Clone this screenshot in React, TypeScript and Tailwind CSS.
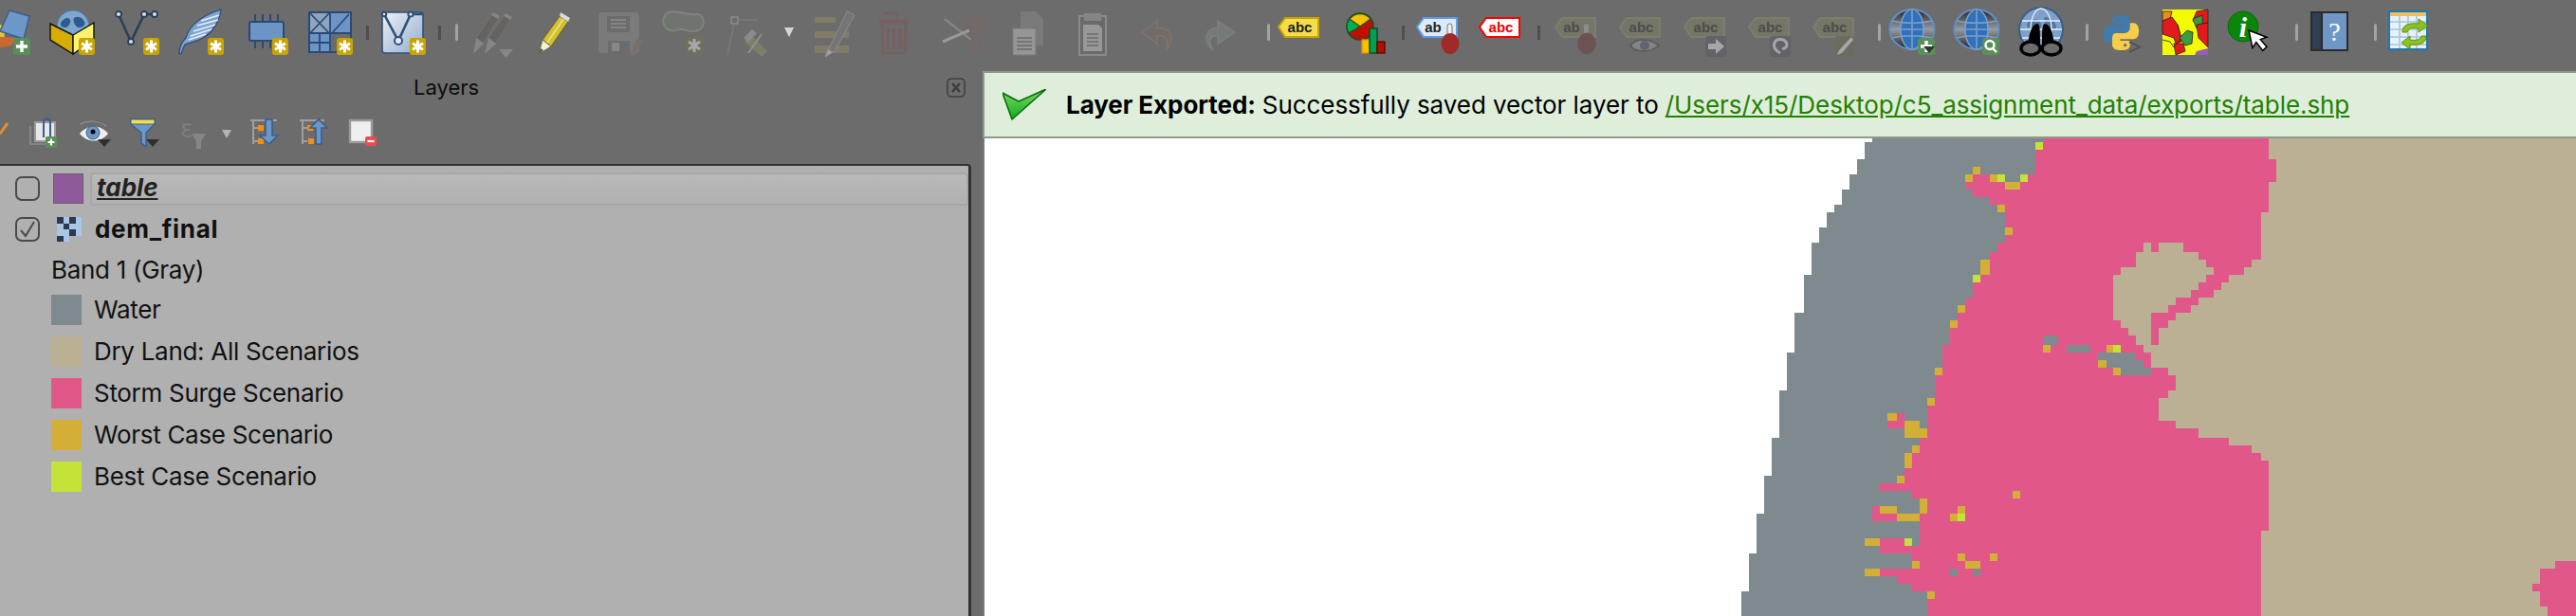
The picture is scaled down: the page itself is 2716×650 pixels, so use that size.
import React from 'react';

// step lists: [row top, x where the colour ends]
const MAP_BOTTOM = 1530;
const whiteEdge: number[][] = [[18, 298], [30, 284], [84, 270], [132, 257], [180, 243], [228, 229], [252, 216], [300, 202], [348, 188], [450, 175], [570, 157], [696, 144], [816, 130], [966, 116], [1086, 103], [1206, 89], [1332, 75], [1452, 62]];
const grayEdge: number[][] = [[18, 606], [54, 592], [132, 466], [180, 480], [204, 510], [228, 538], [348, 524], [378, 510], [402, 493], [450, 493], [474, 480], [522, 466], [546, 466], [570, 452], [618, 438], [672, 425], [744, 425], [768, 411], [864, 397], [936, 397], [966, 383], [990, 383], [1014, 370], [1062, 356], [1110, 312], [1134, 370], [1158, 383], [1308, 312], [1332, 370], [1380, 284], [1404, 342], [1428, 370], [1452, 411], [1476, 397]];
const pinkEdge: number[][] = [[18, 1013], [84, 1027], [156, 1013], [252, 1000], [402, 983], [426, 969], [450, 941], [474, 928], [498, 914], [522, 887], [546, 873], [570, 846], [594, 832], [618, 815], [672, 787], [696, 801], [744, 832], [768, 846], [816, 832], [840, 815], [912, 846], [936, 887], [966, 941], [990, 983], [1014, 1000], [1038, 1013], [1260, 1000]];

const GRAY = '#7e8a8e';
const TAN = '#bcb094';
const PINK = '#e1578a';
const GOLD = '#d3af38';
const LIME = '#c4e338';

// x0, x1, y0, y1, colour
const cells: [number, number, number, number, string][] = [
  [592, 606, 30, 54, LIME], [480, 493, 108, 132, GOLD], [466, 480, 132, 156, GOLD], [480, 510, 132, 156, PINK], [510, 524, 132, 156, GOLD], [524, 538, 132, 156, LIME], [538, 565, 132, 156, GRAY], [565, 578, 132, 156, LIME], [578, 592, 132, 156, PINK], [493, 592, 108, 132, GRAY],
  [466, 592, 156, 180, PINK], [538, 565, 156, 180, GOLD], [524, 538, 228, 252, GOLD], [538, 551, 300, 324, GOLD], [493, 510, 402, 450, GOLD], [480, 493, 450, 474, LIME], [452, 466, 546, 570, GOLD], [438, 452, 594, 618, GOLD],
  [606, 634, 642, 672, GRAY], [606, 620, 672, 696, GOLD], [648, 692, 672, 696, GRAY], [720, 733, 672, 696, GOLD], [733, 746, 672, 696, LIME], [706, 774, 696, 720, GRAY], [706, 720, 720, 744, GOLD], [720, 788, 720, 744, GRAY], [733, 747, 744, 768, GOLD], [747, 802, 744, 768, GRAY],
  [411, 425, 744, 768, GOLD], [397, 411, 840, 864, GOLD], [325, 342, 888, 912, GOLD], [342, 356, 888, 912, PINK], [325, 356, 912, 936, PINK], [356, 383, 912, 936, GOLD], [356, 397, 936, 966, GOLD], [370, 383, 990, 1014, GOLD], [356, 370, 1014, 1062, GOLD], [342, 356, 1086, 1110, GOLD],
  [551, 565, 1134, 1158, GOLD], [383, 397, 1158, 1206, GOLD], [298, 312, 1182, 1206, PINK], [312, 342, 1182, 1206, GOLD], [452, 466, 1182, 1206, GOLD], [298, 342, 1206, 1230, PINK], [342, 383, 1206, 1230, GOLD], [438, 452, 1206, 1230, GOLD], [452, 466, 1206, 1230, LIME],
  [284, 312, 1284, 1308, GOLD], [312, 356, 1284, 1308, PINK], [356, 370, 1284, 1308, LIME], [370, 383, 1284, 1308, GRAY], [452, 466, 1332, 1356, GOLD], [510, 524, 1332, 1356, GOLD], [370, 383, 1356, 1380, GOLD], [466, 493, 1356, 1380, GOLD], [284, 312, 1380, 1404, GOLD], [438, 452, 1380, 1404, GRAY], [480, 493, 1380, 1404, GRAY], [397, 411, 1452, 1476, GOLD],
  [787, 801, 348, 378, TAN], [815, 859, 348, 378, TAN], [774, 887, 378, 402, TAN], [774, 900, 402, 426, TAN], [746, 914, 426, 450, TAN], [733, 900, 450, 474, TAN], [733, 887, 474, 498, TAN], [733, 873, 498, 522, TAN], [733, 846, 522, 546, TAN], [733, 832, 546, 570, TAN], [733, 801, 570, 594, TAN], [746, 801, 594, 618, TAN], [760, 801, 618, 642, TAN], [774, 801, 642, 672, TAN],
  [1530, 1568, 1356, 1380, PINK], [1503, 1568, 1380, 1428, PINK], [1489, 1568, 1428, 1452, PINK], [1503, 1568, 1452, 1500, PINK], [1517, 1568, 1500, 1530, PINK],
];

const stepPath = (steps: number[][]) => {
  let d = `M0 ${steps[0][0]}`;
  steps.forEach((s, i) => {
    const next = i + 1 < steps.length ? steps[i + 1][0] : MAP_BOTTOM;
    d += `H${s[1]}V${next}`;
  });
  return d + 'H0Z';
};

const Ico: React.FC<{ className?: string; size?: number; children: React.ReactNode }> = ({ className = '', size = 48, children }) => (
  <svg viewBox={`0 0 ${size} ${size}`} width={size} height={size} className={`shrink-0 overflow-visible ${className}`}>
    {children}
  </svg>
);

const Sep: React.FC<{ light?: boolean; className?: string }> = ({ light, className = '' }) => (
  <div className={`shrink-0 ${light ? 'w-[3px] h-[18px] rounded-sm bg-[#a3a3a3]' : 'w-[3px] h-[15px] bg-[#4e4e4e]'} ${className}`} />
);

const Star = () => (
  <g>
    <rect x="31" y="30" width="17" height="18" rx="3" fill="#c9a400" />
    <path d="M39.5 32.5v13M34 35.8l11 6.4M34 42.2l11-6.4" stroke="#fff" strokeWidth="3" />
  </g>
);

const GreenBadge: React.FC<{ kind?: 'plus' | 'search' }> = ({ kind = 'plus' }) => (
  <g>
    <rect x="30" y="30" width="18" height="18" rx="3" fill="#5a8f5a" />
    {kind === 'plus' ? (
      <path d="M39 33v12M33 39h12" stroke="#fff" strokeWidth="3.4" />
    ) : (
      <g fill="none" stroke="#fff" strokeWidth="2.4">
        <circle cx="38" cy="37.5" r="4.5" />
        <path d="M41 41l4 4" />
      </g>
    )}
  </g>
);

const Tag: React.FC<{ fill: string; stroke: string; text: string; color: string; size?: number }> = ({ fill, stroke, text, color, size = 15 }) => (
  <g>
    <path d="M3 18.5L10 9H45V29H10Z" fill={fill} stroke={stroke} strokeWidth="2" />
    <text x="25.5" y="24" textAnchor="middle" fontFamily="Liberation Sans, sans-serif" fontWeight="700" fontSize={size} fill={color}>{text}</text>
  </g>
);

const PencilShape: React.FC<{ body: string; dark: string; eraser: string; tip: string }> = ({ body, dark, eraser, tip }) => (
  <g>
    <path d="M30 7L39 13L21 39L12 32Z" fill={body} stroke={dark} strokeWidth="1" />
    <path d="M34 10L17 35" stroke={tip} strokeWidth="2" opacity="0.6" />
    <path d="M31 3L41 9L39 13L30 7Z" fill={eraser} />
    <path d="M12 32L21 39L8 47Z" fill={tip} stroke={dark} strokeWidth="0.8" />
    <path d="M10 41L13 43L8 47Z" fill={dark} />
  </g>
);

const Globe: React.FC = () => (
  <g>
    <defs>
      <linearGradient id="globeBand" x1="0" y1="0" x2="0" y2="1">
        <stop offset="0" stopColor="#222" /><stop offset="0.5" stopColor="#9a9a9a" /><stop offset="1" stopColor="#222" />
      </linearGradient>
    </defs>
    <ellipse cx="24" cy="21" rx="23.5" ry="21" fill="url(#globeBand)" stroke="#5f8fc7" strokeWidth="2" />
    <ellipse cx="24" cy="21" rx="12" ry="20" fill="#2f72bb" />
    <g fill="none" stroke="#7d9fc8" strokeWidth="1.6">
      <ellipse cx="24" cy="21" rx="12" ry="21" />
      <path d="M3 12c12 3 30 3 42 0M1 21H47M3 30c12-3 30-3 42 0M24 0v42" />
    </g>
  </g>
);

const Toolbar = () => (
  <div className="flex items-center h-12 mt-[10px] mb-[16px] shrink-0">
    <Ico className="ml-[-16px]">
      <path d="M10 14L22 18L20 32L0 30Z" fill="#e6c532" />
      <path d="M6 28L32 30L28 38L6 42Z" fill="#c9692f" />
      <path d="M26 1L47 7L41 31L16 23Z" fill="#6d97c9" stroke="#3a5f8c" strokeWidth="1.4" />
      <GreenBadge />
    </Ico>
    <Ico className="ml-5">
      <circle cx="25" cy="18" r="17" fill="#7ea6cf" stroke="#4c76a6" />
      <path d="M12 14c4-6 9-6 10-3s-2 8-5 8-6-2-5-5zM26 9c5-3 9 0 11 4s-3 6-6 6-7-7-5-10zM20 24c3 0 4 3 3 6h-3z" fill="#2f5a8e" />
      <path d="M1 15L25 27V47L1 32Z" fill="#d7ad00" stroke="#111" strokeWidth="1.4" />
      <path d="M25 27L47 14V32L25 47Z" fill="#fdf36c" stroke="#111" strokeWidth="1.4" />
      <Star />
    </Ico>
    <Ico className="ml-5">
      <path d="M5 5L18 34L32 5H43" fill="none" stroke="#2a3f58" strokeWidth="2.6" />
      <g fill="#d8dde4" stroke="#2a3f58" strokeWidth="1.8">
        <circle cx="5" cy="5" r="3" /><circle cx="18" cy="34" r="3" /><circle cx="32" cy="5" r="3" /><circle cx="43" cy="5" r="3" />
      </g>
      <Star />
    </Ico>
    <Ico className="ml-5">
      <path d="M1 47C1 40 4 34 8 30C12 16 26 6 45 0C44 10 38 24 24 31C18 34 12 35 7 37C5 40 4 44 3 47Z" fill="#7fa4d2" stroke="#2a4a75" strokeWidth="1.2" />
      <path d="M43 6L24 12M42 11L20 17M39 16L16 23M35 21L13 28M29 26L11 32" stroke="#e6eef8" strokeWidth="1.7" />
      <Star />
    </Ico>
    <Ico className="ml-5">
      <path d="M13 5v8M21 5v8M29 5v8M37 5v8M13 33v8M21 33v8M29 33v8" stroke="#2a4a75" strokeWidth="2" />
      <rect x="7" y="13" width="36" height="20" rx="2" fill="#6c95c5" stroke="#2a4a75" strokeWidth="2" />
      <Star />
    </Ico>
    <Ico className="ml-5">
      <rect x="2" y="3" width="44" height="42" fill="#6c95c5" stroke="#2a4a75" strokeWidth="2" />
      <rect x="3" y="4" width="20" height="21" fill="#8fa4bd" />
      <path d="M3 4L23 25M23 4L3 25M24 3V45M2 25H46M13 25V45M2 35H24M26 25L44 5" stroke="#2a4a75" strokeWidth="1.8" fill="none" />
      <path d="M25 26H45V44H25Z" fill="#6c6c6c" />
      <Star />
    </Ico>
    <Sep className="ml-[14px]" />
    <Ico className="ml-3">
      <defs>
        <linearGradient id="vbg" x1="0" y1="0" x2="1" y2="1">
          <stop offset="0" stopColor="#eef1f5" /><stop offset="1" stopColor="#8facd0" />
        </linearGradient>
      </defs>
      <rect x="2" y="3" width="43" height="43" rx="3" fill="url(#vbg)" stroke="#2f5079" strokeWidth="1.6" />
      <path d="M4 5L19 33L32 5L44 5" fill="none" stroke="#2f5079" strokeWidth="2.6" />
      <g fill="#e6ebf2" stroke="#2f5079" strokeWidth="2">
        <circle cx="19" cy="33" r="4" /><circle cx="32" cy="5" r="2.6" /><circle cx="4" cy="5" r="2.2" />
      </g>
      <Star />
    </Ico>
    <Sep className="ml-[13px]" />
    <Sep light className="ml-[15px]" />
    <Ico className="ml-[13px]">
      <g opacity="0.85">
        <path d="M24 3L31 7L14 36L6 30Z" fill="#66615f" stroke="#777" />
        <path d="M24 3L31 7L29 10L22 6Z" fill="#8a8a8a" />
        <path d="M6 30L14 36L3 47Z" fill="#8a8a8a" />
        <path d="M37 4L44 8L27 36L19 30Z" fill="#66615f" stroke="#777" />
        <path d="M37 4L44 8L42 11L35 7Z" fill="#8a8a8a" />
        <path d="M19 30L27 36L15 47Z" fill="#8a8a8a" />
      </g>
      <path d="M30 42H45L37.5 51Z" fill="#868686" />
    </Ico>
    <Ico className="ml-4">
      <PencilShape body="#d6bf28" dark="#5a5a45" eraser="#d9d9d9" tip="#f2f2d0" />
    </Ico>
    <Ico className="ml-5">
      <rect x="3" y="3" width="43" height="43" rx="4" fill="#7a7a7a" />
      <path d="M12 7H36V24H12ZM13 33H36V46H13Z" fill="#6c6c6c" />
      <path d="M16 11H32M16 15H32M16 19H32" stroke="#858585" strokeWidth="2" />
      <rect x="17" y="35" width="8" height="9" fill="#868686" />
      <path d="M44 30L50 34L40 50L36 48Z" fill="#7a706a" />
    </Ico>
    <Ico className="ml-[22px]">
      <path d="M4 5C12 -2 26 7 36 5C46 4 46 20 38 22C28 26 24 18 14 22C2 24-2 11 4 5Z" fill="#6f746f" stroke="#7f837e" strokeWidth="2" />
      <rect x="24" y="27" width="20" height="22" rx="2" fill="#6f6e5f" />
      <path d="M34 31v14M28 34l12 8M28 42l12-8" stroke="#a8a8a8" strokeWidth="3" />
      <circle cx="34" cy="38" r="3" fill="#a8a8a8" />
    </Ico>
    <Ico className="ml-[19px]">
      <rect x="6" y="8" width="7" height="7" fill="#6c6c6c" stroke="#9a9a9a" />
      <path d="M13 11H34M9 15L2 48" stroke="#7a7a7a" strokeWidth="1.4" fill="none" />
      <path d="M20 34L27 27L44 44L38 50Z" fill="#7e7e68" />
      <path d="M38 26L24 46" stroke="#8f8f8f" strokeWidth="2" />
      <path d="M19 30L28 21L33 25L24 35Z" fill="#8a8a8a" />
    </Ico>
    <div className="shrink-0 ml-[14px] w-[10px] h-[10px] [clip-path:polygon(0_0,100%_0,50%_100%)] bg-[#d6d6d6]" />
    <Ico className="ml-5">
      <path d="M2 8H24V14H2ZM2 23H24V30H2ZM2 38H38V46H2ZM28 23H38V30H28Z" fill="#807c66" />
      <path d="M36 2L44 6L23 44L13 50Z" fill="#757575" stroke="#8c8c8c" />
      <path d="M16 42L21 45L13 50Z" fill="#a0a0a0" />
    </Ico>
    <Ico className="ml-[17px]">
      <g fill="none" stroke="#766060" strokeWidth="3">
        <path d="M4 12H36M10 4H24V12" />
        <path d="M8 14L9 46H32L33 14Z" />
        <path d="M14 20V42M20.5 20V42M27 20V42" strokeWidth="3.6" />
      </g>
    </Ico>
    <Ico className="ml-[22px]">
      <g fill="none">
        <path d="M4 10L32 32" stroke="#858585" strokeWidth="2.4" />
        <path d="M2 34L30 22" stroke="#999" strokeWidth="3" />
        <ellipse cx="36" cy="17" rx="5" ry="8" stroke="#7d6464" strokeWidth="2.4" />
        <ellipse cx="36" cy="38" rx="5" ry="8" stroke="#7d6464" strokeWidth="2.4" />
      </g>
    </Ico>
    <Ico className="ml-5">
      <path d="M16 2H32L40 10V38H16Z" fill="#7a7a7a" />
      <path d="M8 20H32V48H8Z" fill="#969696" stroke="#7a7a7a" />
      <path d="M12 30H28M12 34H28M12 38H28M12 42H28" stroke="#6a6a6a" strokeWidth="1.4" />
    </Ico>
    <Ico className="ml-5">
      <rect x="10" y="7" width="28" height="41" fill="#6a6a6a" stroke="#8a8a8a" strokeWidth="2" />
      <rect x="15" y="4" width="18" height="8" fill="#858585" />
      <path d="M14 16H30L34 20V44H14Z" fill="#989898" />
      <path d="M18 26H30M18 30H30M18 34H30M18 38H30" stroke="#6a6a6a" strokeWidth="1.4" />
    </Ico>
    <Ico className="ml-5">
      <path d="M24 12L8 24L24 36V28C32 26 36 30 34 42C42 32 40 18 24 20Z" fill="#746a64" stroke="#7c7470" strokeWidth="1.5" />
    </Ico>
    <Ico className="ml-5">
      <path d="M20 12L38 24L20 36V28C12 27 10 32 14 42C4 34 6 18 20 20Z" fill="#75797a" stroke="#7b7f80" strokeWidth="1.5" />
    </Ico>
    <Sep light className="ml-6" />
    <Ico className="ml-[6px]">
      <Tag fill="#f3dd4a" stroke="#c9a400" text="abc" color="#1d1d1d" />
    </Ico>
    <Ico className="ml-[23px]">
      <circle cx="18" cy="18" r="14" fill="#c20e00" stroke="#234a24" strokeWidth="1.6" />
      <path d="M18 18L6 25A14 14 0 0 1 18 4Z" fill="#00b050" stroke="#234a24" strokeWidth="1.2" />
      <path d="M18 18L7 10A14 14 0 0 1 29 10Z" fill="#f5c400" stroke="#234a24" strokeWidth="1.2" />
      <rect x="20" y="32" width="8" height="14" fill="#f5c400" stroke="#e88a00" strokeWidth="1.4" />
      <rect x="28" y="20" width="8" height="26" fill="#00a050" stroke="#0c4a20" strokeWidth="1.4" />
      <rect x="36" y="34" width="8" height="12" fill="#b01000" stroke="#5a0a00" strokeWidth="1.4" />
    </Ico>
    <Sep className="ml-[14px]" />
    <Ico className="ml-[10px]">
      <path d="M3 18.5L10 9H45V29H10Z" fill="#dfeaf7" stroke="#5d9ce8" strokeWidth="2" />
      <text x="20" y="24" textAnchor="middle" fontFamily="Liberation Sans, sans-serif" fontWeight="700" fontSize="15" fill="#222">ab</text>
      <rect x="35" y="15" width="5" height="16" rx="2.5" fill="#eee" stroke="#555" strokeWidth="0.8" />
      <ellipse cx="38" cy="36" rx="9.5" ry="11" fill="#a02a2a" />
    </Ico>
    <Ico className="ml-[18px]">
      <Tag fill="#fff" stroke="#ff0000" text="abc" color="#ee0000" />
    </Ico>
    <Sep className="ml-4" />
    <Ico className="ml-[13px]">
      <path d="M3 18.5L10 9H45V29H10Z" fill="#767666" stroke="#7c7c70" strokeWidth="2" />
      <text x="20" y="24" textAnchor="middle" fontFamily="Liberation Sans, sans-serif" fontWeight="700" fontSize="15" fill="#4c4c4c">ab</text>
      <rect x="33" y="15" width="5" height="16" rx="2.5" fill="#8c8c8c" />
      <ellipse cx="36" cy="36" rx="9.5" ry="11" fill="#6e5252" stroke="#5f5f5f" />
    </Ico>
    <Ico className="ml-5">
      <Tag fill="#767666" stroke="#7c7c70" text="abc" color="#4c4c4c" />
      <path d="M14 38C20 30 34 30 44 38C34 46 20 46 14 38Z" fill="#848484" stroke="#595959" strokeWidth="1.4" />
      <circle cx="29" cy="38" r="5" fill="#5f6670" />
    </Ico>
    <Ico className="ml-5">
      <Tag fill="#767666" stroke="#7c7c70" text="abc" color="#4c4c4c" />
      <rect x="25" y="28" width="22" height="22" rx="3" fill="#606368" />
      <path d="M28 36H36V31L45 39L36 47V42H28Z" fill="#a6a6a6" />
    </Ico>
    <Ico className="ml-5">
      <Tag fill="#767666" stroke="#7c7c70" text="abc" color="#4c4c4c" />
      <rect x="25" y="28" width="22" height="22" rx="3" fill="#606368" />
      <path d="M36 46C32 44 28 40 30 35C32 30 42 30 43 37C43 40 40 42 38 41" fill="none" stroke="#a6a6a6" strokeWidth="3" />
    </Ico>
    <Ico className="ml-5">
      <Tag fill="#767666" stroke="#7c7c70" text="abc" color="#4c4c4c" />
      <rect x="26" y="28" width="20" height="22" rx="2" fill="#6c6c5e" />
      <path d="M43 29L45 32L33 46L28 48L30 43Z" fill="#a6a6a6" />
    </Ico>
    <Sep light className="ml-[23px]" />
    <Ico className="ml-[9px]">
      <Globe />
      <GreenBadge />
      <path d="M36 39L48 39L42 46Z" fill="#333" />
    </Ico>
    <Ico className="ml-5">
      <Globe />
      <GreenBadge kind="search" />
    </Ico>
    <Ico className="ml-5">
      <circle cx="24" cy="21" r="23" fill="#7da1c9" stroke="#385f8c" strokeWidth="2" />
      <path d="M10 14c6-6 14-4 14 2s-6 8-10 6-6-6-4-8zM28 8c6 0 12 6 12 10s-8 4-10 0-4-10-2-10z" fill="#4f76a3" />
      <g fill="none" stroke="#e8eef5" strokeWidth="1.3">
        <ellipse cx="24" cy="21" rx="11" ry="22" />
        <path d="M2 21H46M4 12H44M4 30H44" />
      </g>
      <g fill="#000">
        <path d="M10 36C12 24 14 16 20 15C23 15 23 24 23 36ZM38 36C36 24 34 16 28 15C25 15 25 24 25 36Z" />
      </g>
      <g fill="#6c6c6c" stroke="#000" strokeWidth="3.4">
        <ellipse cx="13" cy="41" rx="10" ry="7" />
        <ellipse cx="35" cy="41" rx="10" ry="7" />
      </g>
    </Ico>
    <Sep light className="ml-[23px]" />
    <Ico className="ml-[11px]">
      <g transform="translate(3 4) scale(1.7)">
        <path d="M12 1C8 1 6.5 2.3 6.5 4.5V7H12.5V8H4.5C2.3 8 1 10 1 13C1 16 2.3 18 4.5 18H6.5V15C6.5 13 8 11.7 10 11.7H15C16.5 11.7 17.5 10.7 17.5 9V4.5C17.5 2.3 15.5 1 12 1Z" fill="#3f7cad" />
        <circle cx="9.5" cy="4.2" r="1" fill="#6c6c6c" />
        <g transform="rotate(180 12 12)">
          <path d="M12 1C8 1 6.5 2.3 6.5 4.5V7H12.5V8H4.5C2.3 8 1 10 1 13C1 16 2.3 18 4.5 18H6.5V15C6.5 13 8 11.7 10 11.7H15C16.5 11.7 17.5 10.7 17.5 9V4.5C17.5 2.3 15.5 1 12 1Z" fill="#f7ce4b" />
          <circle cx="9.5" cy="4.2" r="1" fill="#6c6c6c" />
        </g>
      </g>
      <path d="M32 34L43 39.5L32 45" fill="none" stroke="#555" strokeWidth="2" />
    </Ico>
    <Ico className="ml-[19px]">
      <rect x="0" y="0" width="48" height="48" fill="#f3fb00" />
      <g stroke="#222" strokeWidth="0.8">
        <path d="M0 2H10L8 10L0 12Z" fill="#f08a20" />
        <path d="M0 12L10 8L16 16L20 34L14 36L12 30L0 26Z" fill="#e41a1a" />
        <path d="M16 16L20 30L12 40L8 34L0 32" fill="none" />
        <path d="M36 2L48 0V14L42 16L32 12Z" fill="#e41a1a" />
        <path d="M32 10L42 6L43 24L36 20Z" fill="#3f9a40" />
        <path d="M18 30L26 22L32 24L31 36L24 38Z" fill="#3f9a40" />
        <path d="M36 16L48 14V40L38 30Z" fill="#e41a1a" />
        <path d="M12 36L22 36L24 44L14 48Z" fill="#e41a1a" />
      </g>
      <path d="M34 48L36 44L48 41V48Z" fill="#9b59c0" />
    </Ico>
    <Ico className="ml-5">
      <circle cx="17" cy="18" r="16" fill="#0b860b" stroke="#0a6a0a" />
      <text x="17" y="29" textAnchor="middle" fontFamily="Liberation Serif, serif" fontStyle="italic" fontWeight="700" fontSize="30" fill="#fff">i</text>
      <path d="M23 22L23 41L28 36L33 46L38 43L33 34L40 33Z" transform="rotate(-12 23 22)" fill="#fff" stroke="#000" strokeWidth="1.5" />
    </Ico>
    <Sep light className="ml-6" />
    <Ico className="ml-[9px]">
      <rect x="4" y="2" width="40" height="42" fill="#2b2b2b" />
      <rect x="6" y="4" width="9" height="38" fill="#2e4054" />
      <rect x="17" y="4" width="25" height="38" fill="#6e97c6" />
      <text x="29.5" y="33" textAnchor="middle" fontFamily="Liberation Serif, serif" fontSize="28" fill="#fff">?</text>
    </Ico>
    <Sep light className="ml-[23px]" />
    <Ico className="ml-3">
      <rect x="1" y="2" width="40" height="40" fill="#e6f2fb" stroke="#1a78b0" strokeWidth="2" />
      <rect x="2" y="3" width="38" height="4" fill="#f2bd63" />
      <path d="M2 13H40M2 21H40M2 29H40M2 37H40M12 7V41M21 7V41M30 7V41" stroke="#a9c3d9" strokeWidth="1.6" />
      <path d="M15 24C15 16 22 14 32 15V10L42 17L32 24V20C25 19 21 20 20 24Z" fill="#8cc21d" stroke="#5f8f10" />
      <path d="M40 28C40 36 33 38 23 37V42L14 35L23 28V32C30 33 34 32 35 28Z" fill="#8cc21d" stroke="#5f8f10" />
    </Ico>
  </div>
);

const LayersToolbar = () => (
  <div className="flex items-start h-[63px] pt-[15px] border-b-0">
    <Ico size={32} className="ml-[-24px]">
      <path d="M32 5L24 16" stroke="#d6952a" strokeWidth="3" />
    </Ico>
    <Ico size={32} className="ml-[22px]">
      <path d="M2 8V27H22" fill="none" stroke="#8c8c8c" strokeWidth="1.6" />
      <rect x="7" y="4" width="21" height="20" fill="#e8e8e8" stroke="#9a9a9a" strokeWidth="2" />
      <path d="M16 20V4C16-1 23-1 23 4V20" fill="none" stroke="#3b5f8c" strokeWidth="2" />
      <rect x="18" y="19" width="12" height="12" rx="2" fill="#5a8f5a" />
      <path d="M24 21.5v7M20.5 25h7" stroke="#fff" strokeWidth="2" />
    </Ico>
    <Ico size={32} className="ml-[22px]">
      <path d="M0 6C8 2 20 2 28 8" fill="none" stroke="#8e8e8e" strokeWidth="1.2" />
      <path d="M0 16C8 6 22 6 30 16C22 26 8 26 0 16Z" fill="#f0f0f0" />
      <circle cx="14" cy="15" r="7" fill="#6d97c9" stroke="#3a5f8c" />
      <circle cx="14" cy="14" r="2.5" fill="#000" />
      <path d="M19 22H33L26 30Z" fill="#2f2f2f" />
    </Ico>
    <Ico size={32} className="ml-[21px]">
      <path d="M1 1H26V6L17 15V30L12 26V15L1 6Z" fill="#6d97c9" stroke="#3a5f8c" strokeWidth="1.4" />
      <rect x="1" y="1" width="25" height="5" fill="#f4e04d" stroke="#3a5f8c" strokeWidth="1" />
      <path d="M17 22H31L24 30Z" fill="#2f2f2f" />
    </Ico>
    <Ico size={32} className="ml-5">
      <text x="1" y="20" fontFamily="DejaVu Sans, sans-serif" fontSize="26" fill="#7d7d7d">ε</text>
      <path d="M13 16H28L23 24V32H18V24Z" fill="#858585" />
    </Ico>
    <div className="shrink-0 ml-[13px] mt-[12px] w-[10px] h-[9px] [clip-path:polygon(0_0,100%_0,50%_100%)] bg-[#b5b5b5]" />
    <Ico size={32} className="ml-5">
      <path d="M0 2H28M3 2V27M3 10H8M3 24H8" stroke="#9f9f9f" strokeWidth="2" fill="none" />
      <rect x="8" y="7" width="6" height="6" fill="#f08f1d" />
      <rect x="8" y="21" width="6" height="6" fill="#f08f1d" />
      <path d="M16 1H23V18H29L19.5 27L10 18H16Z" fill="#6d97c9" stroke="#3a5f8c" strokeWidth="1.6" />
    </Ico>
    <Ico size={32} className="ml-5">
      <path d="M0 2H26M3 2V27M3 10H8M3 24H8" stroke="#9f9f9f" strokeWidth="2" fill="none" />
      <rect x="8" y="7" width="6" height="6" fill="#f08f1d" />
      <rect x="9" y="21" width="6" height="6" fill="#f08f1d" />
      <path d="M17 27V10H11L20 1L29 10H23V27Z" fill="#6d97c9" stroke="#3a5f8c" strokeWidth="1.6" />
    </Ico>
    <Ico size={32} className="ml-[19px]">
      <rect x="2" y="2" width="23" height="23" fill="#efefef" stroke="#9a9a9a" strokeWidth="2.4" />
      <rect x="18" y="19" width="12" height="10" rx="2" fill="#ee4a52" />
      <path d="M20.5 24h7" stroke="#fff" strokeWidth="2.2" />
    </Ico>
  </div>
);

const Swatch: React.FC<{ color: string }> = ({ color }) => <div className="w-8 h-8 shrink-0" style={{ backgroundColor: color }} />;

const legend = [
  { label: 'Water', color: GRAY },
  { label: 'Dry Land: All Scenarios', color: TAN },
  { label: 'Storm Surge Scenario', color: PINK },
  { label: 'Worst Case Scenario', color: GOLD },
  { label: 'Best Case Scenario', color: LIME },
];

const Checkbox: React.FC<{ checked?: boolean }> = ({ checked }) => (
  <div className="w-[26px] h-[26px] shrink-0 rounded-[7px] border-2 border-[#4a4a4a] flex items-center justify-center">
    {checked && (
      <svg viewBox="0 0 22 22" width="22" height="22">
        <path d="M4 12L9 18L18 3" fill="none" stroke="#4a4a4a" strokeWidth="2" />
      </svg>
    )}
  </div>
);

const LayerTree = () => (
  <div className="flex-1 w-[1024px] bg-[#b0b0b0] border-t-2 border-r-[3px] border-[#333333] rounded-tr-sm text-[26px] leading-8 tracking-[-0.3px] text-[#111111] pt-[5px]">
    <div className="flex items-center h-[38px] pl-4">
      <Checkbox />
      <div className="w-8 h-8 ml-[14px] shrink-0 bg-[#8e5a99] border border-[#6f5a75]" />
      <div className="flex-1 h-[35px] ml-[7px] mr-0 pl-[5px] bg-gradient-to-b from-[#b9b9b9] to-[#b1b1b1] border-2 border-[#a6a6a6] rounded-sm flex items-center">
        <span className="font-bold italic underline text-[#222222] pb-[2px] tracking-normal">table</span>
      </div>
    </div>
    <div className="flex items-center h-[46px] pl-4 mt-[1px]">
      <Checkbox checked />
      <svg viewBox="0 0 4 4" width="26" height="26" className="ml-[18px] shrink-0" shapeRendering="crispEdges">
        <path d="M0 0h1v1H0zM2 0h1v1H2zM1 1h1v1H1zM0 3h1v1H0zM2 2h1v1H2z" fill="#2a3a50" />
        <path d="M1 0h1v1H1zM3 0h1v1H3zM0 1h1v1H0zM2 1h2v1H2zM0 2h2v1H0zM3 2h1v1H3zM1 3h1v1H1z" fill="#a9c6e6" />
      </svg>
      <span className="ml-[14px] font-bold tracking-[0.7px]">dem_final</span>
    </div>
    <div className="h-[40px] flex items-center pl-[54px] pb-[1px]">Band 1 (Gray)</div>
    {legend.map((item) => (
      <div key={item.label} className="flex items-center h-[44px] pl-[54px]">
        <Swatch color={item.color} />
        <span className="ml-[13px] pb-[1px] whitespace-nowrap">{item.label}</span>
      </div>
    ))}
  </div>
);

const MapCanvas = () => (
  <div className="flex-1 min-h-0 flex justify-end bg-white border-l-2 border-[#777777]">
    <svg viewBox="0 18 1568 1512" width="916" height="504" preserveAspectRatio="none" shapeRendering="crispEdges" className="shrink-0">
      <rect x="0" y="18" width="1568" height="1512" fill={TAN} />
      <path d={stepPath(pinkEdge)} fill={PINK} />
      <path d={stepPath(grayEdge)} fill={GRAY} />
      {cells.map((c, i) => (
        <rect key={i} x={c[0]} y={c[2]} width={c[1] - c[0]} height={c[3] - c[2]} fill={c[4]} />
      ))}
      <path d={stepPath(whiteEdge)} fill="#ffffff" />
    </svg>
  </div>
);

const MessageBar = () => (
  <div className="h-[71px] shrink-0 bg-[#dfeedb] border-2 border-r-0 border-[#8f9a8a] flex items-center text-[26px] tracking-[-0.07px] text-black">
    <svg viewBox="0 0 46 33" width="46" height="33" className="ml-[19px] shrink-0">
      <defs>
        <linearGradient id="chk" x1="0" y1="0" x2="0" y2="1">
          <stop offset="0" stopColor="#7be06a" /><stop offset="1" stopColor="#12a81a" />
        </linearGradient>
      </defs>
      <path d="M0 4L17 13L46 0L10 32Z" fill="url(#chk)" stroke="#0d6e12" strokeWidth="1.6" strokeLinejoin="round" />
    </svg>
    <span className="ml-[21px] font-bold">Layer Exported:</span>
    <span className="ml-[7px]">Successfully saved vector layer to</span>
    <a className="ml-[7px] underline text-[#238000]">/Users/x15/Desktop/c5_assignment_data/exports/table.shp</a>
  </div>
);

export default function App() {
  return (
    <div className="w-[2716px] h-[650px] overflow-hidden flex flex-col bg-[#6c6c6c] [font-family:Inter,sans-serif]">
      <Toolbar />
      <div className="flex flex-1 min-h-0 mt-[1px]">
        <div className="w-[1036px] shrink-0 flex flex-col">
          <div className="flex items-center h-[35px]">
            <span className="ml-[436px] text-[22px] text-[#0c0c0c]">Layers</span>
            <svg viewBox="0 0 20 21" width="20" height="21" className="ml-auto mr-[18px]">
              <rect x="1" y="1" width="18" height="19" rx="4" fill="#6c6c6c" stroke="#404040" strokeWidth="1.6" />
              <path d="M6 6L14 15M14 6L6 15" stroke="#3c3c3c" strokeWidth="2.6" />
            </svg>
          </div>
          <LayersToolbar />
          <LayerTree />
        </div>
        <div className="flex-1 min-w-0 flex flex-col">
          <MessageBar />
          <MapCanvas />
        </div>
      </div>
    </div>
  );
}
